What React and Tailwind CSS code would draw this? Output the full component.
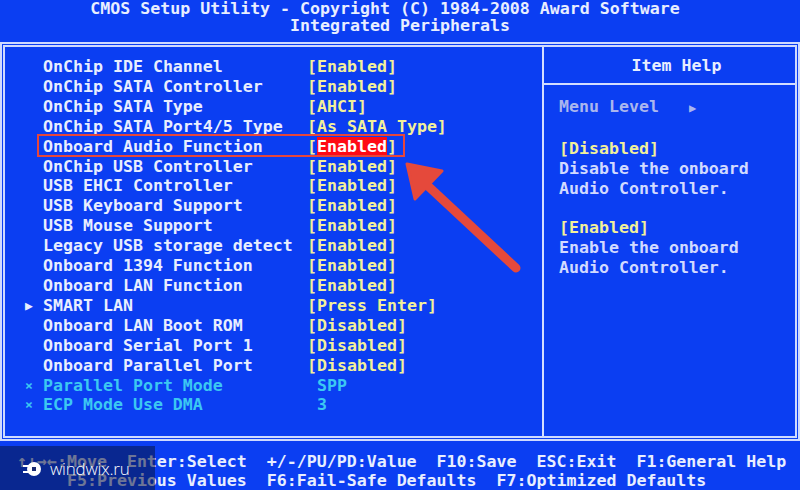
import React from "react";

const rows = [
  { label: "OnChip IDE Channel", value: "[Enabled]" },
  { label: "OnChip SATA Controller", value: "[Enabled]" },
  { label: "OnChip SATA Type", value: "[AHCI]" },
  { label: "OnChip SATA Port4/5 Type", value: "[As SATA Type]" },
  { label: "Onboard Audio Function", value: "[Enabled]", hot: true },
  { label: "OnChip USB Controller", value: "[Enabled]" },
  { label: "USB EHCI Controller", value: "[Enabled]" },
  { label: "USB Keyboard Support", value: "[Enabled]" },
  { label: "USB Mouse Support", value: "[Enabled]" },
  { label: "Legacy USB storage detect", value: "[Enabled]" },
  { label: "Onboard 1394 Function", value: "[Enabled]" },
  { label: "Onboard LAN Function", value: "[Enabled]" },
  { label: "SMART LAN", value: "[Press Enter]", mark: "sub" },
  { label: "Onboard LAN Boot ROM", value: "[Disabled]" },
  { label: "Onboard Serial Port 1", value: "[Disabled]" },
  { label: "Onboard Parallel Port", value: "[Disabled]" },
  { label: "Parallel Port Mode", value: " SPP", mark: "off" },
  { label: "ECP Mode Use DMA", value: " 3", mark: "off" },
];

function Row({ row }) {
  const off = row.mark === "off";
  return (
    <div className="grid grid-cols-[38px_264px_1fr] whitespace-pre">
      <span className={"pl-[20px] text-[13px] " + (off ? "text-[#3cc8f2]" : "text-[#e8eeff]")}>
        {row.mark === "sub" ? "▶" : off ? "×" : ""}
      </span>
      <span className={off ? "text-[#3cc8f2]" : "text-[#e8eeff]"}>{row.label}</span>
      {row.hot ? (
        <span className="text-[#f2f09a]">
          [<span className="bg-[#ff0a16] text-white">Enabled</span>]
        </span>
      ) : (
        <span className={off ? "text-[#3cc8f2]" : "text-[#f2f09a]"}>{row.value}</span>
      )}
    </div>
  );
}

export default function App() {
  return (
    <div className="relative w-[800px] h-[490px] overflow-hidden bg-[#0b3ef2] font-['DejaVu_Sans_Mono',monospace] font-bold text-[16.6px] text-[#e8eeff]">
      {/* title */}
      <div className="h-[42px] flex flex-col items-center leading-[17px]">
        <div className="mr-[30px] whitespace-pre">CMOS Setup Utility - Copyright (C) 1984-2008 Award Software</div>
        <div>Integrated Peripherals</div>
      </div>

      {/* main frame */}
      <div className="h-[399px] border-[5px] border-double border-[#cfdaff] flex">
        <div className="w-[539px] border-r-2 border-[#d4deff] pt-[10px] leading-[19.9px]">
          {rows.map((r) => (
            <Row key={r.label} row={r} />
          ))}
        </div>
        <div className="flex-1 flex flex-col">
          <div className="h-[38px] border-b-2 border-[#d4deff] flex items-center justify-center pl-[14px] pt-[3px]">
            Item Help
          </div>
          <div className="pl-[15px] pt-[12px] leading-[19.9px] whitespace-pre text-[#d2daff]">
            <div className="text-[#aab6ee]">
              Menu Level   <span className="text-[12px]">▶</span>
            </div>
            <div>&nbsp;</div>
            <div className="text-[#f2f09a]">[Disabled]</div>
            <div>Disable the onboard</div>
            <div>Audio Controller.</div>
            <div>&nbsp;</div>
            <div className="text-[#f2f09a]">[Enabled]</div>
            <div>Enable the onboard</div>
            <div>Audio Controller.</div>
          </div>
        </div>
      </div>

      {/* key legend */}
      <div className="pt-[11px] pl-[17px] leading-[19px] whitespace-pre">
        <div>↑↓→←:Move  Enter:Select  +/-/PU/PD:Value  F10:Save  ESC:Exit  F1:General Help</div>
        <div>     F5:Previous Values  F6:Fail-Safe Defaults  F7:Optimized Defaults</div>
      </div>

      {/* annotation: red box + arrow */}
      <div className="absolute left-[37px] top-[134px] w-[368px] h-[23px] border-2 border-[#e6463b]" />
      <svg className="absolute left-0 top-0 pointer-events-none" width="800" height="490" viewBox="0 0 800 490">
        <line x1="428" y1="186" x2="516" y2="268" stroke="#e5493b" strokeWidth="9" strokeLinecap="round" />
        <polygon points="407,164 442,171 415,199" fill="#e5493b" stroke="#e5493b" strokeWidth="3" strokeLinejoin="round" />
      </svg>

      {/* watermark */}
      <div className="absolute left-0 top-[446px] w-[155px] h-[44px] bg-[#0a1440]/55 flex items-center gap-[8px] pl-[22px] pt-[2px]">
        <svg width="20" height="16" viewBox="0 0 20 16">
          <circle cx="12" cy="8" r="7" fill="#fff" />
          <rect x="1" y="4" width="6" height="2" fill="#fff" />
          <rect x="1" y="10" width="6" height="2" fill="#fff" />
          <rect x="10" y="6" width="4" height="4" fill="#1a2a70" />
        </svg>
        <span className="font-['Open_Sans',sans-serif] font-light text-[17px] text-white tracking-[-0.2px]">windwix.ru</span>
      </div>
    </div>
  );
}
